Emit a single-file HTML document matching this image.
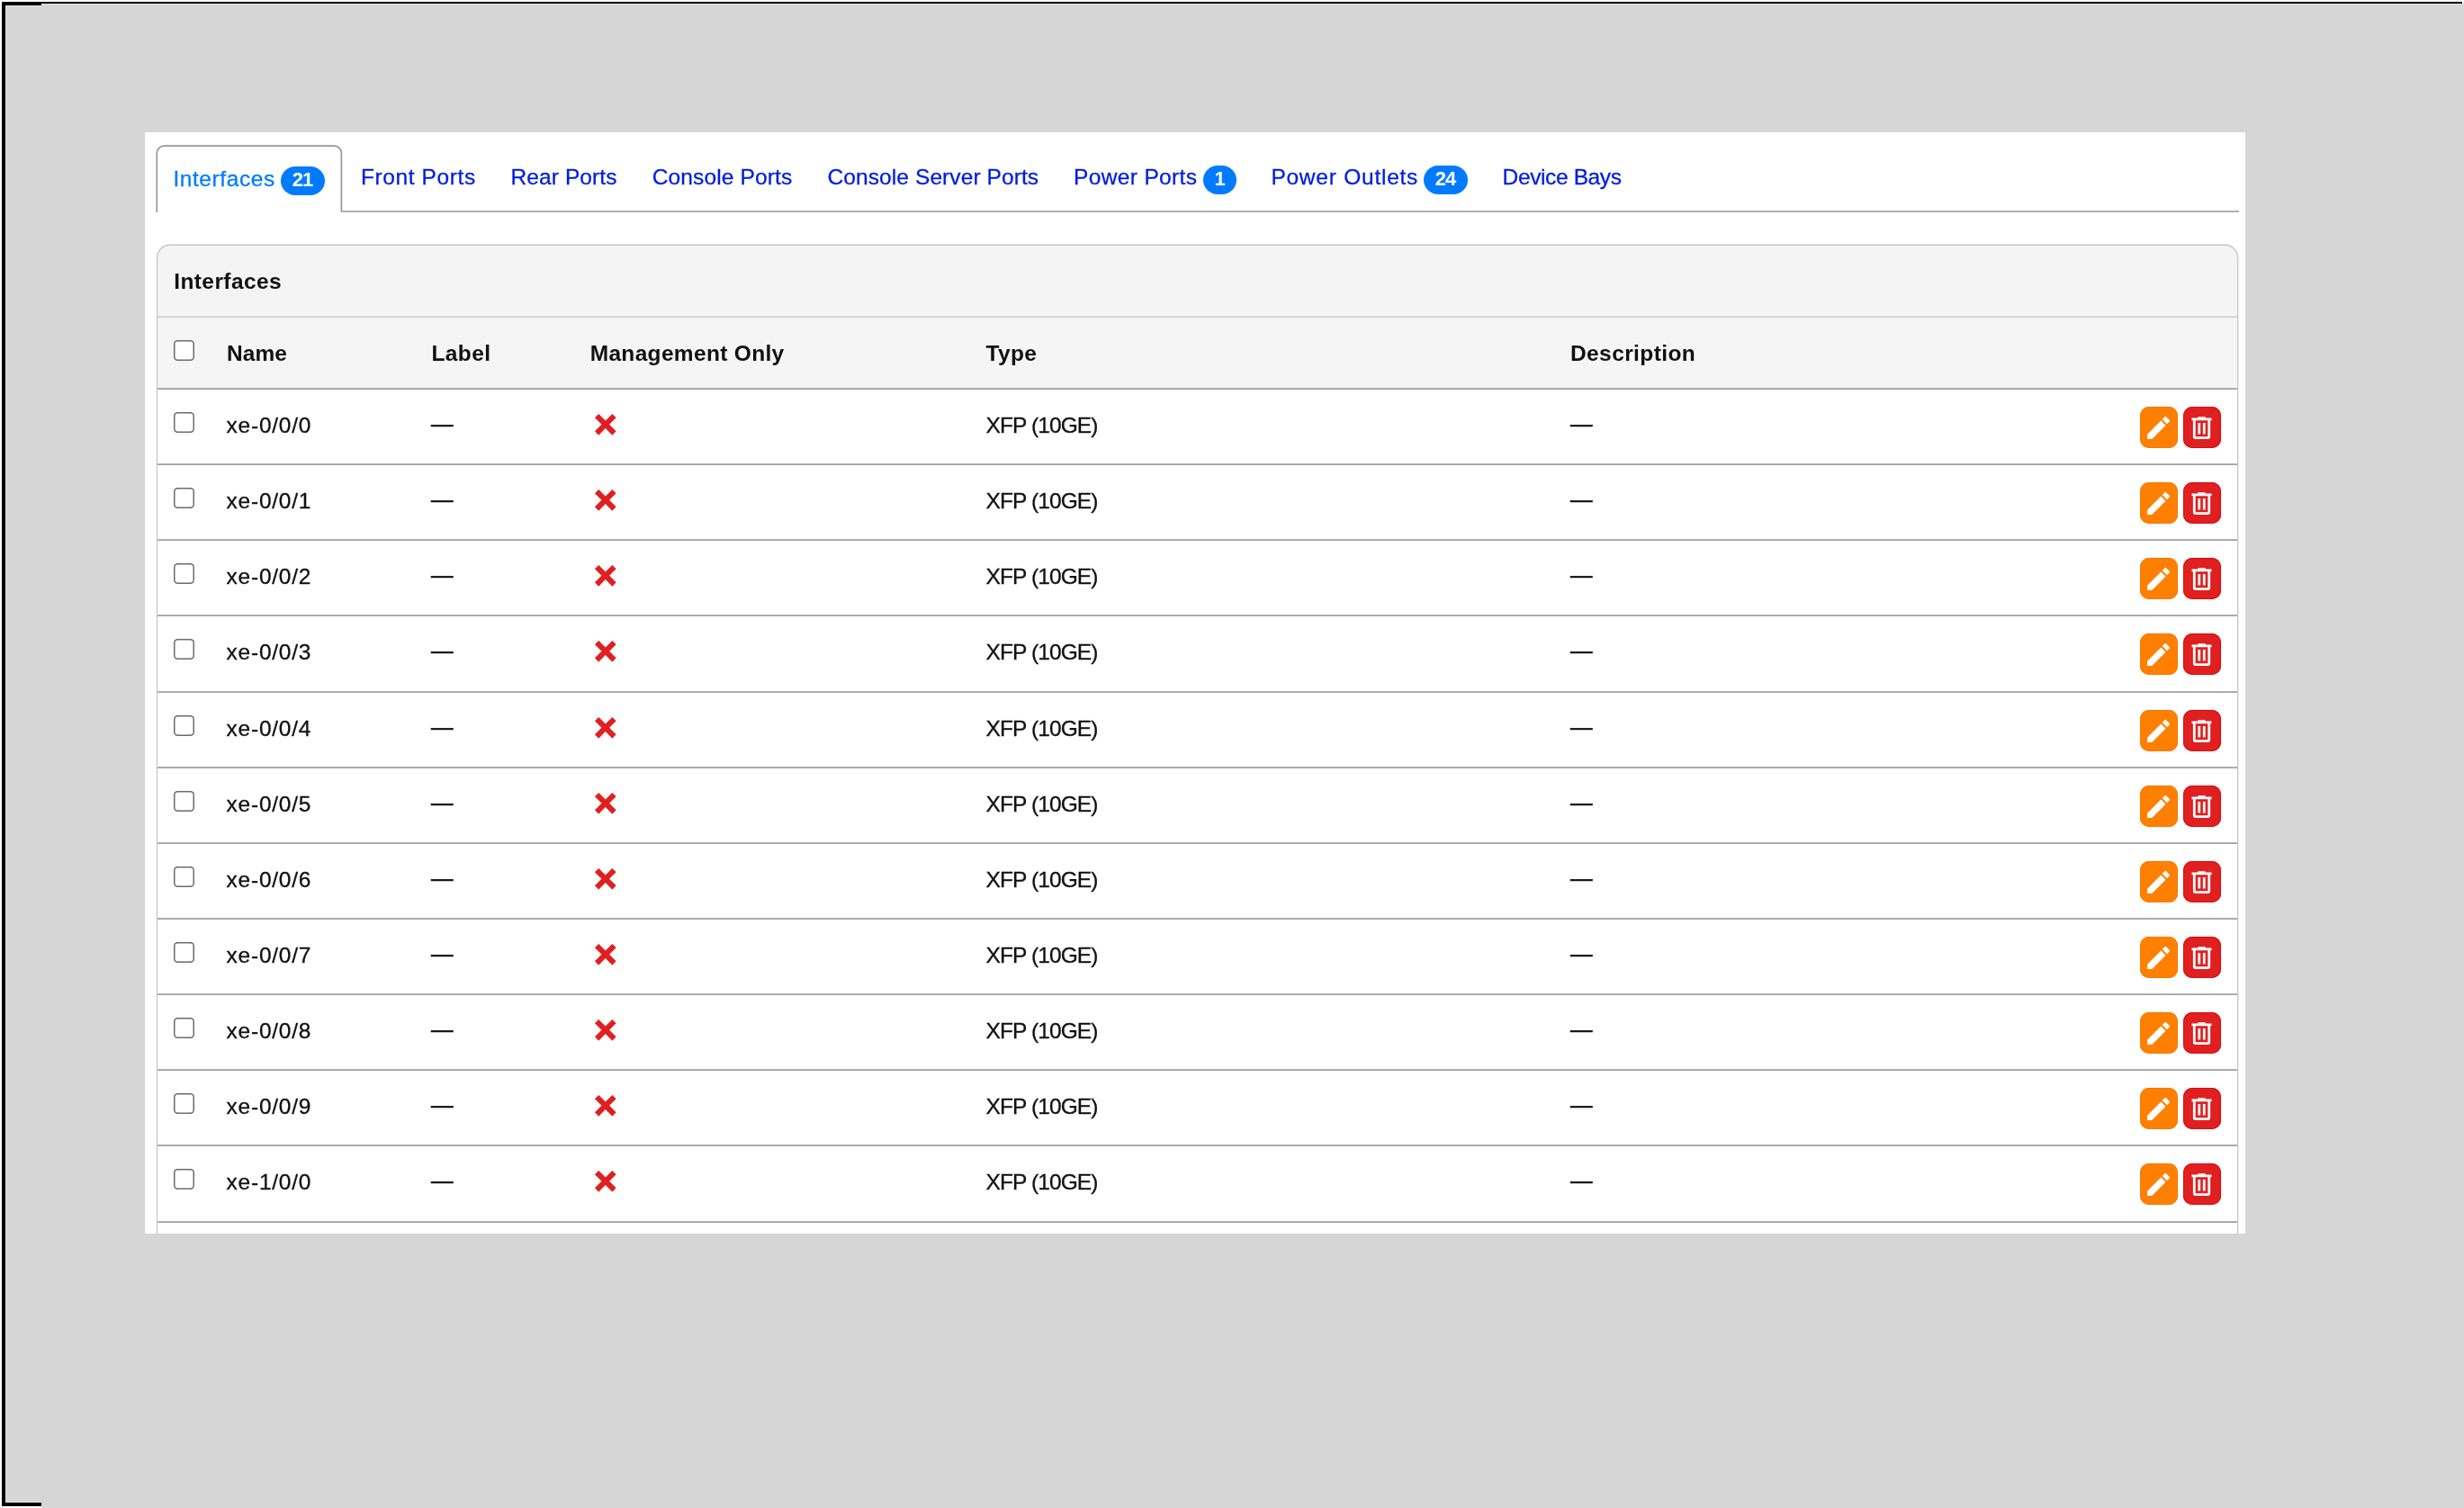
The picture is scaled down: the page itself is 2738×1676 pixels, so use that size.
<!DOCTYPE html><html lang="en"><head><meta charset="utf-8"><title>Interfaces</title><style>

*{box-sizing:border-box}
html,body{margin:0;padding:0}
body{width:2738px;height:1676px;position:relative;overflow:hidden;background:#fff;
 font-family:"Liberation Sans",sans-serif;font-size:24.5px;color:#111}
.abs{position:absolute}
#bg{left:6px;top:4px;width:2732px;height:1672px;background:#d6d6d6}
.blk{position:absolute;background:#000}
.hl{position:absolute;background:#dfdfdf}
#panel{position:absolute;left:161px;top:147px;width:2334px;height:1224px;background:#fff;overflow:hidden}
#page{position:absolute;left:-161px;top:-147px;width:2738px;height:1676px;will-change:transform}
ul.tabs{list-style:none;margin:0;padding:0;position:absolute;left:173px;top:161px;width:2315px;height:75px}
ul.tabs li{position:absolute;top:0;height:75px;white-space:nowrap}
ul.tabs li a{position:absolute;left:0;top:0;color:#001ddd;text-decoration:none;line-height:24.5px;white-space:nowrap;display:block}
ul.tabs li.active{left:0;width:207px;border:2px solid transparent;border-bottom:0;border-radius:8px 8px 0 0;height:75px}
.tabline{position:absolute;left:160px;top:150px;width:2340px;height:100px}
ul.tabs li.active a{color:#007bff}
.badge{position:absolute;display:block;background:#007bff;color:#fff;border-radius:16px;height:32px;line-height:30px;text-align:center;font-size:22px;font-weight:700;letter-spacing:-1px;text-indent:-1px}
.card{position:absolute;left:173px;top:271px;width:2315px;height:1300px;border:2px solid #fff;border-radius:16px;background:#fff;overflow:hidden}
.cardline{position:absolute;left:173px;top:271px;width:2314.1px;height:1300px;border-radius:15.5px;box-shadow:inset 0 0 0 1.6px #c8c8c8;transform:translate(0.6px,0.35px);pointer-events:none}
.card-h{position:absolute;left:0;top:0;width:100%;height:80px;background:#f4f4f4;box-shadow:inset 0 -1.6px 0 #c9c9c9;font-weight:700}
.card-h span{position:absolute;left:18.6px;top:27.66px;line-height:24.5px;white-space:nowrap}
table{position:absolute;left:0;top:80px;width:2311px;border-collapse:separate;border-spacing:0;table-layout:fixed}
th,td{padding:0;text-align:left;vertical-align:top;position:relative;white-space:nowrap;font-weight:400}
thead th{height:80px;background:#f5f5f5;box-shadow:inset 0 -1.7px 0 #a0a0a0;font-weight:700}
tbody td{box-shadow:inset 0 -1.7px 0 #a0a0a0}
.t{position:absolute;line-height:24.5px;white-space:nowrap}
tbody .t,ul.tabs li a{-webkit-text-stroke:0.3px currentColor}
tbody .t.d{-webkit-text-stroke:0.55px currentColor}
.cb{position:absolute;left:18px;width:23px;height:23px;border-radius:4.5px;background:#fff;box-shadow:inset 0 0 0 1.5px #6b6b6b;margin:0;-webkit-appearance:none;appearance:none;display:block}
.x{position:absolute;display:block}
.btn{position:absolute;display:block;width:42.4px;height:46px;border-radius:10px}
.btn svg{position:absolute;left:3.8px;top:7.5px;width:33px;height:33px}
.btn-w{background:#ff8000;box-shadow:inset 0 0 0 1px #f87800}
.btn-d{background:#e02020;box-shadow:inset 0 0 0 1px #dc0a0a}
.dash{position:absolute;display:block;line-height:24.5px}

</style></head><body>
<div id="bg" class="abs"></div>
<div class="blk" style="left:2px;top:2px;width:2734px;height:2px"></div>
<div class="blk" style="left:2px;top:2px;width:44px;height:4px"></div>
<div class="blk" style="left:2px;top:2px;width:4px;height:1672px"></div>
<div class="abs" style="left:0;top:1670px;width:46px;height:6px;background:#fff"></div>
<div class="blk" style="left:2px;top:1670px;width:44px;height:4px"></div>
<div class="hl" style="left:46px;top:4px;width:2690px;height:1px"></div>
<div class="hl" style="left:6px;top:6px;width:40px;height:1px"></div>
<div class="hl" style="left:6px;top:6px;width:1px;height:1664px"></div>
<div class="hl" style="left:6px;top:1669px;width:40px;height:1px"></div>
<div id="panel"><div id="page">
<svg class="tabline" viewBox="160 150 2340 100" aria-hidden="true"><path d="M174.3 236 V170.2 a8 8 0 0 1 8 -8 H371.4 a8 8 0 0 1 8 8 V235 H2488" fill="none" stroke="#979797" stroke-width="1.7"/></svg>
<ul class="tabs">
<li class="active"><a href="#" style="left:17.40px;top:23.66px;letter-spacing:0.578px;">Interfaces</a><span class="badge" style="left:136.90px;top:22.10px;width:49.00px">21</span></li>
<li style="left:228.00px"><a href="#" style="top:23.56px;letter-spacing:0.600px;">Front Ports</a></li>
<li style="left:394.60px"><a href="#" style="top:23.56px;letter-spacing:0.078px;">Rear Ports</a></li>
<li style="left:551.80px"><a href="#" style="top:23.56px;letter-spacing:0.125px;">Console Ports</a></li>
<li style="left:746.60px"><a href="#" style="top:23.56px;letter-spacing:0.084px;">Console Server Ports</a></li>
<li style="left:1020.00px"><a href="#" style="top:23.56px;letter-spacing:0.360px;">Power Ports</a><span class="badge" style="left:143.80px;top:22.60px;width:37.50px">1</span></li>
<li style="left:1239.40px"><a href="#" style="top:23.56px;letter-spacing:0.758px;">Power Outlets</a><span class="badge" style="left:169.40px;top:22.60px;width:49.30px">24</span></li>
<li style="left:1496.60px"><a href="#" style="top:23.56px;letter-spacing:-0.380px;">Device Bays</a></li>
</ul>
<div class="card">
<div class="card-h"><span style="left:18.20px;letter-spacing:0.411px;">Interfaces</span></div>
<table><colgroup>
<col style="width:61px">
<col style="width:224px">
<col style="width:180px">
<col style="width:440px">
<col style="width:650px">
<col style="width:610px">
<col style="width:146px">
</colgroup><thead><tr>
<th><input type="checkbox" class="cb" style="top:25px" aria-label="Toggle all"></th>
<th><span class="t" style="left:16.00px;top:27.86px;letter-spacing:0.067px;">Name</span></th>
<th><span class="t" style="left:19.40px;top:27.86px;letter-spacing:0.400px;">Label</span></th>
<th><span class="t" style="left:15.70px;top:27.86px;letter-spacing:0.321px;">Management Only</span></th>
<th><span class="t" style="left:15.60px;top:27.86px;letter-spacing:0.300px;">Type</span></th>
<th><span class="t" style="left:15.00px;top:27.86px;letter-spacing:0.400px;">Description</span></th>
<th></th></tr></thead><tbody>
<tr style="height:84px">
<td><input type="checkbox" class="cb" style="top:25px" aria-label="Select xe-0/0/0"></td>
<td><span class="t" style="left:15.60px;top:27.66px;letter-spacing:0.757px;">xe-0/0/0</span></td>
<td><span class="t d" style="left:19.10px;top:26.06px;">&mdash;</span></td>
<td><svg class="x" style="left:15.05px;top:21.25px;width:35.6px;height:35.6px" viewBox="0 0 24 24" role="img" aria-label="No"><path fill="#e02020" d="M20 6.91L17.09 4L12 9.09L6.91 4L4 6.91L9.09 12L4 17.09L6.91 20L12 14.91L17.09 20L20 17.09L14.91 12L20 6.91Z"/></svg></td>
<td><span class="t" style="left:15.60px;top:27.66px;letter-spacing:-0.911px;">XFP (10GE)</span></td>
<td><span class="t d" style="left:15.00px;top:26.06px;">&mdash;</span></td>
<td><a href="#" class="btn btn-w" style="left:37.90px;top:18.60px" title="Edit"><svg viewBox="0 0 24 24" aria-hidden="true"><path fill="#fff" d="M20.71,7.04C21.1,6.65 21.1,6 20.71,5.63L18.37,3.29C18,2.9 17.35,2.9 16.96,3.29L15.12,5.12L18.87,8.87M3,17.25V21H6.75L17.81,9.93L14.06,6.18L3,17.25Z"/></svg></a><a href="#" class="btn btn-d" style="left:85.90px;top:18.60px" title="Delete"><svg viewBox="0 0 24 24" aria-hidden="true"><path fill="#fff" d="M9,3V4H4V6H5V19A2,2 0 0,0 7,21H17A2,2 0 0,0 19,19V6H20V4H15V3H9M7,6H17V19H7V6M9,8V17H11V8H9M13,8V17H15V8H13Z"/></svg></a></td>
</tr>
<tr style="height:84px">
<td><input type="checkbox" class="cb" style="top:25px" aria-label="Select xe-0/0/1"></td>
<td><span class="t" style="left:15.60px;top:27.66px;letter-spacing:0.757px;">xe-0/0/1</span></td>
<td><span class="t d" style="left:19.10px;top:26.06px;">&mdash;</span></td>
<td><svg class="x" style="left:15.05px;top:21.25px;width:35.6px;height:35.6px" viewBox="0 0 24 24" role="img" aria-label="No"><path fill="#e02020" d="M20 6.91L17.09 4L12 9.09L6.91 4L4 6.91L9.09 12L4 17.09L6.91 20L12 14.91L17.09 20L20 17.09L14.91 12L20 6.91Z"/></svg></td>
<td><span class="t" style="left:15.60px;top:27.66px;letter-spacing:-0.911px;">XFP (10GE)</span></td>
<td><span class="t d" style="left:15.00px;top:26.06px;">&mdash;</span></td>
<td><a href="#" class="btn btn-w" style="left:37.90px;top:18.60px" title="Edit"><svg viewBox="0 0 24 24" aria-hidden="true"><path fill="#fff" d="M20.71,7.04C21.1,6.65 21.1,6 20.71,5.63L18.37,3.29C18,2.9 17.35,2.9 16.96,3.29L15.12,5.12L18.87,8.87M3,17.25V21H6.75L17.81,9.93L14.06,6.18L3,17.25Z"/></svg></a><a href="#" class="btn btn-d" style="left:85.90px;top:18.60px" title="Delete"><svg viewBox="0 0 24 24" aria-hidden="true"><path fill="#fff" d="M9,3V4H4V6H5V19A2,2 0 0,0 7,21H17A2,2 0 0,0 19,19V6H20V4H15V3H9M7,6H17V19H7V6M9,8V17H11V8H9M13,8V17H15V8H13Z"/></svg></a></td>
</tr>
<tr style="height:84px">
<td><input type="checkbox" class="cb" style="top:25px" aria-label="Select xe-0/0/2"></td>
<td><span class="t" style="left:15.60px;top:27.66px;letter-spacing:0.757px;">xe-0/0/2</span></td>
<td><span class="t d" style="left:19.10px;top:26.06px;">&mdash;</span></td>
<td><svg class="x" style="left:15.05px;top:21.25px;width:35.6px;height:35.6px" viewBox="0 0 24 24" role="img" aria-label="No"><path fill="#e02020" d="M20 6.91L17.09 4L12 9.09L6.91 4L4 6.91L9.09 12L4 17.09L6.91 20L12 14.91L17.09 20L20 17.09L14.91 12L20 6.91Z"/></svg></td>
<td><span class="t" style="left:15.60px;top:27.66px;letter-spacing:-0.911px;">XFP (10GE)</span></td>
<td><span class="t d" style="left:15.00px;top:26.06px;">&mdash;</span></td>
<td><a href="#" class="btn btn-w" style="left:37.90px;top:18.60px" title="Edit"><svg viewBox="0 0 24 24" aria-hidden="true"><path fill="#fff" d="M20.71,7.04C21.1,6.65 21.1,6 20.71,5.63L18.37,3.29C18,2.9 17.35,2.9 16.96,3.29L15.12,5.12L18.87,8.87M3,17.25V21H6.75L17.81,9.93L14.06,6.18L3,17.25Z"/></svg></a><a href="#" class="btn btn-d" style="left:85.90px;top:18.60px" title="Delete"><svg viewBox="0 0 24 24" aria-hidden="true"><path fill="#fff" d="M9,3V4H4V6H5V19A2,2 0 0,0 7,21H17A2,2 0 0,0 19,19V6H20V4H15V3H9M7,6H17V19H7V6M9,8V17H11V8H9M13,8V17H15V8H13Z"/></svg></a></td>
</tr>
<tr style="height:85px">
<td><input type="checkbox" class="cb" style="top:25px" aria-label="Select xe-0/0/3"></td>
<td><span class="t" style="left:15.60px;top:27.66px;letter-spacing:0.757px;">xe-0/0/3</span></td>
<td><span class="t d" style="left:19.10px;top:26.06px;">&mdash;</span></td>
<td><svg class="x" style="left:15.05px;top:21.25px;width:35.6px;height:35.6px" viewBox="0 0 24 24" role="img" aria-label="No"><path fill="#e02020" d="M20 6.91L17.09 4L12 9.09L6.91 4L4 6.91L9.09 12L4 17.09L6.91 20L12 14.91L17.09 20L20 17.09L14.91 12L20 6.91Z"/></svg></td>
<td><span class="t" style="left:15.60px;top:27.66px;letter-spacing:-0.911px;">XFP (10GE)</span></td>
<td><span class="t d" style="left:15.00px;top:26.06px;">&mdash;</span></td>
<td><a href="#" class="btn btn-w" style="left:37.90px;top:18.60px" title="Edit"><svg viewBox="0 0 24 24" aria-hidden="true"><path fill="#fff" d="M20.71,7.04C21.1,6.65 21.1,6 20.71,5.63L18.37,3.29C18,2.9 17.35,2.9 16.96,3.29L15.12,5.12L18.87,8.87M3,17.25V21H6.75L17.81,9.93L14.06,6.18L3,17.25Z"/></svg></a><a href="#" class="btn btn-d" style="left:85.90px;top:18.60px" title="Delete"><svg viewBox="0 0 24 24" aria-hidden="true"><path fill="#fff" d="M9,3V4H4V6H5V19A2,2 0 0,0 7,21H17A2,2 0 0,0 19,19V6H20V4H15V3H9M7,6H17V19H7V6M9,8V17H11V8H9M13,8V17H15V8H13Z"/></svg></a></td>
</tr>
<tr style="height:84px">
<td><input type="checkbox" class="cb" style="top:25px" aria-label="Select xe-0/0/4"></td>
<td><span class="t" style="left:15.60px;top:27.66px;letter-spacing:0.757px;">xe-0/0/4</span></td>
<td><span class="t d" style="left:19.10px;top:26.06px;">&mdash;</span></td>
<td><svg class="x" style="left:15.05px;top:21.25px;width:35.6px;height:35.6px" viewBox="0 0 24 24" role="img" aria-label="No"><path fill="#e02020" d="M20 6.91L17.09 4L12 9.09L6.91 4L4 6.91L9.09 12L4 17.09L6.91 20L12 14.91L17.09 20L20 17.09L14.91 12L20 6.91Z"/></svg></td>
<td><span class="t" style="left:15.60px;top:27.66px;letter-spacing:-0.911px;">XFP (10GE)</span></td>
<td><span class="t d" style="left:15.00px;top:26.06px;">&mdash;</span></td>
<td><a href="#" class="btn btn-w" style="left:37.90px;top:18.60px" title="Edit"><svg viewBox="0 0 24 24" aria-hidden="true"><path fill="#fff" d="M20.71,7.04C21.1,6.65 21.1,6 20.71,5.63L18.37,3.29C18,2.9 17.35,2.9 16.96,3.29L15.12,5.12L18.87,8.87M3,17.25V21H6.75L17.81,9.93L14.06,6.18L3,17.25Z"/></svg></a><a href="#" class="btn btn-d" style="left:85.90px;top:18.60px" title="Delete"><svg viewBox="0 0 24 24" aria-hidden="true"><path fill="#fff" d="M9,3V4H4V6H5V19A2,2 0 0,0 7,21H17A2,2 0 0,0 19,19V6H20V4H15V3H9M7,6H17V19H7V6M9,8V17H11V8H9M13,8V17H15V8H13Z"/></svg></a></td>
</tr>
<tr style="height:84px">
<td><input type="checkbox" class="cb" style="top:25px" aria-label="Select xe-0/0/5"></td>
<td><span class="t" style="left:15.60px;top:27.66px;letter-spacing:0.757px;">xe-0/0/5</span></td>
<td><span class="t d" style="left:19.10px;top:26.06px;">&mdash;</span></td>
<td><svg class="x" style="left:15.05px;top:21.25px;width:35.6px;height:35.6px" viewBox="0 0 24 24" role="img" aria-label="No"><path fill="#e02020" d="M20 6.91L17.09 4L12 9.09L6.91 4L4 6.91L9.09 12L4 17.09L6.91 20L12 14.91L17.09 20L20 17.09L14.91 12L20 6.91Z"/></svg></td>
<td><span class="t" style="left:15.60px;top:27.66px;letter-spacing:-0.911px;">XFP (10GE)</span></td>
<td><span class="t d" style="left:15.00px;top:26.06px;">&mdash;</span></td>
<td><a href="#" class="btn btn-w" style="left:37.90px;top:18.60px" title="Edit"><svg viewBox="0 0 24 24" aria-hidden="true"><path fill="#fff" d="M20.71,7.04C21.1,6.65 21.1,6 20.71,5.63L18.37,3.29C18,2.9 17.35,2.9 16.96,3.29L15.12,5.12L18.87,8.87M3,17.25V21H6.75L17.81,9.93L14.06,6.18L3,17.25Z"/></svg></a><a href="#" class="btn btn-d" style="left:85.90px;top:18.60px" title="Delete"><svg viewBox="0 0 24 24" aria-hidden="true"><path fill="#fff" d="M9,3V4H4V6H5V19A2,2 0 0,0 7,21H17A2,2 0 0,0 19,19V6H20V4H15V3H9M7,6H17V19H7V6M9,8V17H11V8H9M13,8V17H15V8H13Z"/></svg></a></td>
</tr>
<tr style="height:84px">
<td><input type="checkbox" class="cb" style="top:25px" aria-label="Select xe-0/0/6"></td>
<td><span class="t" style="left:15.60px;top:27.66px;letter-spacing:0.757px;">xe-0/0/6</span></td>
<td><span class="t d" style="left:19.10px;top:26.06px;">&mdash;</span></td>
<td><svg class="x" style="left:15.05px;top:21.25px;width:35.6px;height:35.6px" viewBox="0 0 24 24" role="img" aria-label="No"><path fill="#e02020" d="M20 6.91L17.09 4L12 9.09L6.91 4L4 6.91L9.09 12L4 17.09L6.91 20L12 14.91L17.09 20L20 17.09L14.91 12L20 6.91Z"/></svg></td>
<td><span class="t" style="left:15.60px;top:27.66px;letter-spacing:-0.911px;">XFP (10GE)</span></td>
<td><span class="t d" style="left:15.00px;top:26.06px;">&mdash;</span></td>
<td><a href="#" class="btn btn-w" style="left:37.90px;top:18.60px" title="Edit"><svg viewBox="0 0 24 24" aria-hidden="true"><path fill="#fff" d="M20.71,7.04C21.1,6.65 21.1,6 20.71,5.63L18.37,3.29C18,2.9 17.35,2.9 16.96,3.29L15.12,5.12L18.87,8.87M3,17.25V21H6.75L17.81,9.93L14.06,6.18L3,17.25Z"/></svg></a><a href="#" class="btn btn-d" style="left:85.90px;top:18.60px" title="Delete"><svg viewBox="0 0 24 24" aria-hidden="true"><path fill="#fff" d="M9,3V4H4V6H5V19A2,2 0 0,0 7,21H17A2,2 0 0,0 19,19V6H20V4H15V3H9M7,6H17V19H7V6M9,8V17H11V8H9M13,8V17H15V8H13Z"/></svg></a></td>
</tr>
<tr style="height:84px">
<td><input type="checkbox" class="cb" style="top:25px" aria-label="Select xe-0/0/7"></td>
<td><span class="t" style="left:15.60px;top:27.66px;letter-spacing:0.757px;">xe-0/0/7</span></td>
<td><span class="t d" style="left:19.10px;top:26.06px;">&mdash;</span></td>
<td><svg class="x" style="left:15.05px;top:21.25px;width:35.6px;height:35.6px" viewBox="0 0 24 24" role="img" aria-label="No"><path fill="#e02020" d="M20 6.91L17.09 4L12 9.09L6.91 4L4 6.91L9.09 12L4 17.09L6.91 20L12 14.91L17.09 20L20 17.09L14.91 12L20 6.91Z"/></svg></td>
<td><span class="t" style="left:15.60px;top:27.66px;letter-spacing:-0.911px;">XFP (10GE)</span></td>
<td><span class="t d" style="left:15.00px;top:26.06px;">&mdash;</span></td>
<td><a href="#" class="btn btn-w" style="left:37.90px;top:18.60px" title="Edit"><svg viewBox="0 0 24 24" aria-hidden="true"><path fill="#fff" d="M20.71,7.04C21.1,6.65 21.1,6 20.71,5.63L18.37,3.29C18,2.9 17.35,2.9 16.96,3.29L15.12,5.12L18.87,8.87M3,17.25V21H6.75L17.81,9.93L14.06,6.18L3,17.25Z"/></svg></a><a href="#" class="btn btn-d" style="left:85.90px;top:18.60px" title="Delete"><svg viewBox="0 0 24 24" aria-hidden="true"><path fill="#fff" d="M9,3V4H4V6H5V19A2,2 0 0,0 7,21H17A2,2 0 0,0 19,19V6H20V4H15V3H9M7,6H17V19H7V6M9,8V17H11V8H9M13,8V17H15V8H13Z"/></svg></a></td>
</tr>
<tr style="height:84px">
<td><input type="checkbox" class="cb" style="top:25px" aria-label="Select xe-0/0/8"></td>
<td><span class="t" style="left:15.60px;top:27.66px;letter-spacing:0.757px;">xe-0/0/8</span></td>
<td><span class="t d" style="left:19.10px;top:26.06px;">&mdash;</span></td>
<td><svg class="x" style="left:15.05px;top:21.25px;width:35.6px;height:35.6px" viewBox="0 0 24 24" role="img" aria-label="No"><path fill="#e02020" d="M20 6.91L17.09 4L12 9.09L6.91 4L4 6.91L9.09 12L4 17.09L6.91 20L12 14.91L17.09 20L20 17.09L14.91 12L20 6.91Z"/></svg></td>
<td><span class="t" style="left:15.60px;top:27.66px;letter-spacing:-0.911px;">XFP (10GE)</span></td>
<td><span class="t d" style="left:15.00px;top:26.06px;">&mdash;</span></td>
<td><a href="#" class="btn btn-w" style="left:37.90px;top:18.60px" title="Edit"><svg viewBox="0 0 24 24" aria-hidden="true"><path fill="#fff" d="M20.71,7.04C21.1,6.65 21.1,6 20.71,5.63L18.37,3.29C18,2.9 17.35,2.9 16.96,3.29L15.12,5.12L18.87,8.87M3,17.25V21H6.75L17.81,9.93L14.06,6.18L3,17.25Z"/></svg></a><a href="#" class="btn btn-d" style="left:85.90px;top:18.60px" title="Delete"><svg viewBox="0 0 24 24" aria-hidden="true"><path fill="#fff" d="M9,3V4H4V6H5V19A2,2 0 0,0 7,21H17A2,2 0 0,0 19,19V6H20V4H15V3H9M7,6H17V19H7V6M9,8V17H11V8H9M13,8V17H15V8H13Z"/></svg></a></td>
</tr>
<tr style="height:84px">
<td><input type="checkbox" class="cb" style="top:25px" aria-label="Select xe-0/0/9"></td>
<td><span class="t" style="left:15.60px;top:27.66px;letter-spacing:0.757px;">xe-0/0/9</span></td>
<td><span class="t d" style="left:19.10px;top:26.06px;">&mdash;</span></td>
<td><svg class="x" style="left:15.05px;top:21.25px;width:35.6px;height:35.6px" viewBox="0 0 24 24" role="img" aria-label="No"><path fill="#e02020" d="M20 6.91L17.09 4L12 9.09L6.91 4L4 6.91L9.09 12L4 17.09L6.91 20L12 14.91L17.09 20L20 17.09L14.91 12L20 6.91Z"/></svg></td>
<td><span class="t" style="left:15.60px;top:27.66px;letter-spacing:-0.911px;">XFP (10GE)</span></td>
<td><span class="t d" style="left:15.00px;top:26.06px;">&mdash;</span></td>
<td><a href="#" class="btn btn-w" style="left:37.90px;top:18.60px" title="Edit"><svg viewBox="0 0 24 24" aria-hidden="true"><path fill="#fff" d="M20.71,7.04C21.1,6.65 21.1,6 20.71,5.63L18.37,3.29C18,2.9 17.35,2.9 16.96,3.29L15.12,5.12L18.87,8.87M3,17.25V21H6.75L17.81,9.93L14.06,6.18L3,17.25Z"/></svg></a><a href="#" class="btn btn-d" style="left:85.90px;top:18.60px" title="Delete"><svg viewBox="0 0 24 24" aria-hidden="true"><path fill="#fff" d="M9,3V4H4V6H5V19A2,2 0 0,0 7,21H17A2,2 0 0,0 19,19V6H20V4H15V3H9M7,6H17V19H7V6M9,8V17H11V8H9M13,8V17H15V8H13Z"/></svg></a></td>
</tr>
<tr style="height:85px">
<td><input type="checkbox" class="cb" style="top:25px" aria-label="Select xe-1/0/0"></td>
<td><span class="t" style="left:15.60px;top:27.66px;letter-spacing:0.757px;">xe-1/0/0</span></td>
<td><span class="t d" style="left:19.10px;top:26.06px;">&mdash;</span></td>
<td><svg class="x" style="left:15.05px;top:21.25px;width:35.6px;height:35.6px" viewBox="0 0 24 24" role="img" aria-label="No"><path fill="#e02020" d="M20 6.91L17.09 4L12 9.09L6.91 4L4 6.91L9.09 12L4 17.09L6.91 20L12 14.91L17.09 20L20 17.09L14.91 12L20 6.91Z"/></svg></td>
<td><span class="t" style="left:15.60px;top:27.66px;letter-spacing:-0.911px;">XFP (10GE)</span></td>
<td><span class="t d" style="left:15.00px;top:26.06px;">&mdash;</span></td>
<td><a href="#" class="btn btn-w" style="left:37.90px;top:18.60px" title="Edit"><svg viewBox="0 0 24 24" aria-hidden="true"><path fill="#fff" d="M20.71,7.04C21.1,6.65 21.1,6 20.71,5.63L18.37,3.29C18,2.9 17.35,2.9 16.96,3.29L15.12,5.12L18.87,8.87M3,17.25V21H6.75L17.81,9.93L14.06,6.18L3,17.25Z"/></svg></a><a href="#" class="btn btn-d" style="left:85.90px;top:18.60px" title="Delete"><svg viewBox="0 0 24 24" aria-hidden="true"><path fill="#fff" d="M9,3V4H4V6H5V19A2,2 0 0,0 7,21H17A2,2 0 0,0 19,19V6H20V4H15V3H9M7,6H17V19H7V6M9,8V17H11V8H9M13,8V17H15V8H13Z"/></svg></a></td>
</tr>
<tr style="height:84px">
<td><input type="checkbox" class="cb" style="top:25px" aria-label="Select xe-1/0/1"></td>
<td><span class="t" style="left:15.60px;top:27.66px;letter-spacing:0.757px;">xe-1/0/1</span></td>
<td><span class="t d" style="left:19.10px;top:26.06px;">&mdash;</span></td>
<td><svg class="x" style="left:15.05px;top:21.25px;width:35.6px;height:35.6px" viewBox="0 0 24 24" role="img" aria-label="No"><path fill="#e02020" d="M20 6.91L17.09 4L12 9.09L6.91 4L4 6.91L9.09 12L4 17.09L6.91 20L12 14.91L17.09 20L20 17.09L14.91 12L20 6.91Z"/></svg></td>
<td><span class="t" style="left:15.60px;top:27.66px;letter-spacing:-0.911px;">XFP (10GE)</span></td>
<td><span class="t d" style="left:15.00px;top:26.06px;">&mdash;</span></td>
<td><a href="#" class="btn btn-w" style="left:37.90px;top:18.60px" title="Edit"><svg viewBox="0 0 24 24" aria-hidden="true"><path fill="#fff" d="M20.71,7.04C21.1,6.65 21.1,6 20.71,5.63L18.37,3.29C18,2.9 17.35,2.9 16.96,3.29L15.12,5.12L18.87,8.87M3,17.25V21H6.75L17.81,9.93L14.06,6.18L3,17.25Z"/></svg></a><a href="#" class="btn btn-d" style="left:85.90px;top:18.60px" title="Delete"><svg viewBox="0 0 24 24" aria-hidden="true"><path fill="#fff" d="M9,3V4H4V6H5V19A2,2 0 0,0 7,21H17A2,2 0 0,0 19,19V6H20V4H15V3H9M7,6H17V19H7V6M9,8V17H11V8H9M13,8V17H15V8H13Z"/></svg></a></td>
</tr>
</tbody></table></div><div class="cardline"></div>
</div></div></body></html>
